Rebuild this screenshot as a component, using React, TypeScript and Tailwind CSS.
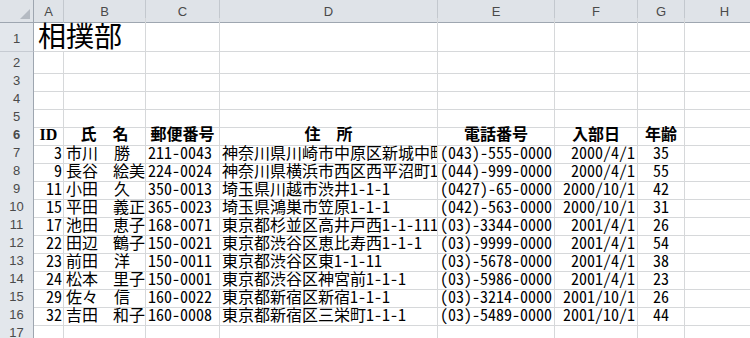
const members = [
  { id: 3, sei: '市川', mei: '勝', zip: '211-0043', addr: '神奈川県川崎市中原区新城中町', tel: '(043)-555-0000', date: '2000/4/1', age: 35 },
  { id: 9, sei: '長谷', mei: '絵美', zip: '224-0024', addr: '神奈川県横浜市西区西平沼町1', tel: '(044)-999-0000', date: '2000/4/1', age: 55 },
  { id: 11, sei: '小田', mei: '久', zip: '350-0013', addr: '埼玉県川越市渋井1-1-1', tel: '(0427)-65-0000', date: '2000/10/1', age: 42 },
  { id: 15, sei: '平田', mei: '義正', zip: '365-0023', addr: '埼玉県鴻巣市笠原1-1-1', tel: '(042)-563-0000', date: '2000/10/1', age: 31 },
  { id: 17, sei: '池田', mei: '恵子', zip: '168-0071', addr: '東京都杉並区高井戸西1-1-111', tel: '(03)-3344-0000', date: '2001/4/1', age: 26 },
  { id: 22, sei: '田辺', mei: '鶴子', zip: '150-0021', addr: '東京都渋谷区恵比寿西1-1-1', tel: '(03)-9999-0000', date: '2001/4/1', age: 54 },
  { id: 23, sei: '前田', mei: '洋', zip: '150-0011', addr: '東京都渋谷区東1-1-11', tel: '(03)-5678-0000', date: '2001/4/1', age: 38 },
  { id: 24, sei: '松本', mei: '里子', zip: '150-0001', addr: '東京都渋谷区神宮前1-1-1', tel: '(03)-5986-0000', date: '2001/4/1', age: 23 },
  { id: 29, sei: '佐々', mei: '信', zip: '160-0022', addr: '東京都新宿区新宿1-1-1', tel: '(03)-3214-0000', date: '2001/10/1', age: 26 },
  { id: 32, sei: '吉田', mei: '和子', zip: '160-0008', addr: '東京都新宿区三栄町1-1-1', tel: '(03)-5489-0000', date: '2001/10/1', age: 44 },
];

const GRID = 'grid grid-cols-[34px_30px_82px_74px_218px_117px_83px_47px_80px]';
const cell = 'border-r border-b border-[#d6d8da] overflow-hidden whitespace-nowrap flex items-center px-[2px] text-[16px] leading-[17px] text-black';
const rowHead = 'border-r border-b border-r-[#9ea6b0] border-b-[#c6cbd2] bg-[#e3e7ec] flex items-center justify-center text-[13px] text-[#4a4a4a] font-["Liberation_Sans",sans-serif]';

function RowHead({ n, end }: { n: number; end?: boolean }) {
  return <div className={`${rowHead} ${end ? 'items-end pb-[3px]' : 'pt-[1px]'}`}>{n}</div>;
}

function Empty() {
  return <div className={cell} />;
}

export default function App() {
  return (
    <div className="w-[750px] h-[338px] overflow-hidden bg-white font-['Noto_Sans_Mono_CJK_JP','Noto_Sans_CJK_JP',monospace]">
      {/* column headers */}
      <div className={`${GRID} h-[18px]`}>
        <div className="border-r border-b border-r-[#9ea6b0] border-b-[#9ea6b0] bg-[#dfe3e8] relative">
          <svg className="absolute right-[3px] bottom-[3px]" width="10" height="10" viewBox="0 0 10 10">
            <polygon points="10,0 10,10 0,10" fill="#b4bac2" />
          </svg>
        </div>
        {['A', 'B', 'C', 'D', 'E', 'F', 'G', 'H'].map((c) => (
          <div
            key={c}
            className="border-r border-b border-r-[#c3c8ce] border-b-[#9ea6b0] bg-[#dfe3e8] flex items-center justify-center pt-[2px] text-[13px] text-[#4a4a4a] font-['Liberation_Sans',sans-serif]"
          >
            {c}
          </div>
        ))}
      </div>

      {/* row 1: title */}
      <div className={`${GRID} h-[34px]`}>
        <RowHead n={1} end />
        <div className="col-span-2 border-r border-b border-[#d6d8da] flex items-end pl-[4px] pb-[1px] text-[28px] leading-[30px] whitespace-nowrap font-['Noto_Sans_CJK_JP',sans-serif]">
          相撲部
        </div>
        {Array.from({ length: 6 }).map((_, i) => <Empty key={i} />)}
      </div>

      {[2, 3, 4, 5].map((n) => (
        <div key={n} className={`${GRID} h-[18px]`}>
          <RowHead n={n} />
          {Array.from({ length: 8 }).map((_, i) => <Empty key={i} />)}
        </div>
      ))}

      {/* row 6: headings */}
      <div className={`${GRID} h-[18px] font-['Liberation_Serif','Noto_Sans_CJK_JP',serif] font-bold`}>
        <RowHead n={6} />
        <div className={`${cell} justify-center`}>ID</div>
        <div className={`${cell} justify-center`}>氏　名</div>
        <div className={`${cell} justify-center`}>郵便番号</div>
        <div className={`${cell} justify-center`}>住　所</div>
        <div className={`${cell} justify-center`}>電話番号</div>
        <div className={`${cell} justify-center`}>入部日</div>
        <div className={`${cell} justify-center`}>年齢</div>
        <Empty />
      </div>

      {members.map((m, i) => (
        <div key={m.id} className={`${GRID} h-[18px]`}>
          <RowHead n={i + 7} />
          <div className={`${cell} justify-end pr-[1px]`}>{m.id}</div>
          <div className={cell}>
            <span>{m.sei}</span>
            {m.mei.length === 1 ? (
              <span className="ml-[16px]">{m.mei}</span>
            ) : (
              <span className="ml-auto -mr-[2px]">{m.mei}</span>
            )}
          </div>
          <div className={cell}>{m.zip}</div>
          <div className={cell}>{m.addr}</div>
          <div className={cell}>{m.tel}</div>
          <div className={`${cell} justify-end`}>{m.date}</div>
          <div className={`${cell} justify-center`}>{m.age}</div>
          <Empty />
        </div>
      ))}

      <div className={`${GRID} h-[18px]`}>
        <RowHead n={17} />
        {Array.from({ length: 8 }).map((_, i) => <Empty key={i} />)}
      </div>
    </div>
  );
}
